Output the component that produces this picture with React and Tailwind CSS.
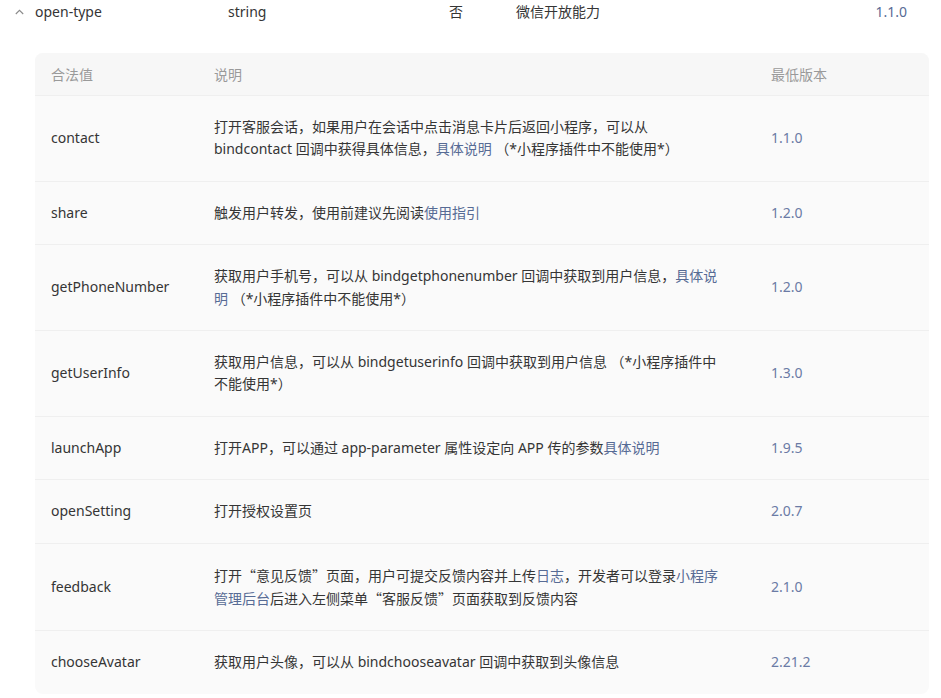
import React from "react";

const L = ({ children }) => <span className="text-[#576b95]">{children}</span>;
const Q = ({ children }) => (
  <span style={{ fontFamily: '"Noto Sans CJK SC", sans-serif' }}>{children}</span>
);

const rows = [
  {
    name: "contact",
    desc: [
      <>打开客服会话，如果用户在会话中点击消息卡片后返回小程序，可以从</>,
      <>bindcontact 回调中获得具体信息，<L>具体说明</L> （*小程序插件中不能使用*）</>,
    ],
    ver: "1.1.0",
  },
  {
    name: "share",
    desc: [<>触发用户转发，使用前建议先阅读<L>使用指引</L></>],
    ver: "1.2.0",
  },
  {
    name: "getPhoneNumber",
    desc: [
      <>获取用户手机号，可以从 bindgetphonenumber 回调中获取到用户信息，<L>具体说</L></>,
      <><L>明</L> （*小程序插件中不能使用*）</>,
    ],
    ver: "1.2.0",
  },
  {
    name: "getUserInfo",
    desc: [
      <>获取用户信息，可以从 bindgetuserinfo 回调中获取到用户信息 （*小程序插件中</>,
      <>不能使用*）</>,
    ],
    ver: "1.3.0",
  },
  {
    name: "launchApp",
    desc: [<>打开APP，可以通过 app-parameter 属性设定向 APP 传的参数<L>具体说明</L></>],
    ver: "1.9.5",
  },
  {
    name: "openSetting",
    desc: [<>打开授权设置页</>],
    ver: "2.0.7",
  },
  {
    name: "feedback",
    desc: [
      <>打开<Q>“</Q>意见反馈<Q>”</Q>页面，用户可提交反馈内容并上传<L>日志</L>，开发者可以登录<L>小程序</L></>,
      <><L>管理后台</L>后进入左侧菜单<Q>“</Q>客服反馈<Q>”</Q>页面获取到反馈内容</>,
    ],
    ver: "2.1.0",
  },
  {
    name: "chooseAvatar",
    desc: [<>获取用户头像，可以从 bindchooseavatar 回调中获取到头像信息</>],
    ver: "2.21.2",
  },
];

export default function App() {
  return (
    <div
      className="w-[941px] h-[698px] overflow-hidden bg-white text-[14px] text-[#353535]"
      style={{ fontFamily: '"Noto Sans", "Noto Sans CJK SC", sans-serif' }}
    >
      <div className="flex items-center h-[24px] leading-[24px]">
        <div className="w-[35px] flex justify-center pl-[3px]">
          <svg width="9" height="6" viewBox="0 0 9 6" fill="none">
            <path d="M0.8 5 L4.5 1.3 L8.2 5" stroke="#8a8a8a" strokeWidth="1.1" />
          </svg>
        </div>
        <div className="w-[193px]">open-type</div>
        <div className="w-[221px]">string</div>
        <div className="w-[67px]">否</div>
        <div className="flex-1">微信开放能力</div>
        <div className="pr-[34px] text-[#576b95]">1.1.0</div>
      </div>

      <div className="ml-[35px] mr-[12px] mt-[29px] rounded-lg overflow-hidden bg-[#fafafa]">
        <div className="flex items-center h-[43px] bg-[#f7f7f7] border-b border-[#efefef] text-[#9a9a9a]">
          <div className="w-[163px] pl-4">合法值</div>
          <div className="w-[557px] pl-4">说明</div>
          <div className="flex-1 pl-4">最低版本</div>
        </div>
        {rows.map((r, i) => (
          <div
            key={r.name}
            className={
              "flex items-center py-5 leading-[22.4px] " +
              (i < rows.length - 1 ? "border-b border-[#efefef]" : "")
            }
          >
            <div className="w-[163px] pl-4">{r.name}</div>
            <div className="w-[557px] pl-4 pr-4">
              {r.desc.map((d, j) => (
                <div key={j} className="whitespace-nowrap">
                  {d}
                </div>
              ))}
            </div>
            <div className="flex-1 pl-4 text-[#6b7ba5]">{r.ver}</div>
          </div>
        ))}
      </div>
    </div>
  );
}
